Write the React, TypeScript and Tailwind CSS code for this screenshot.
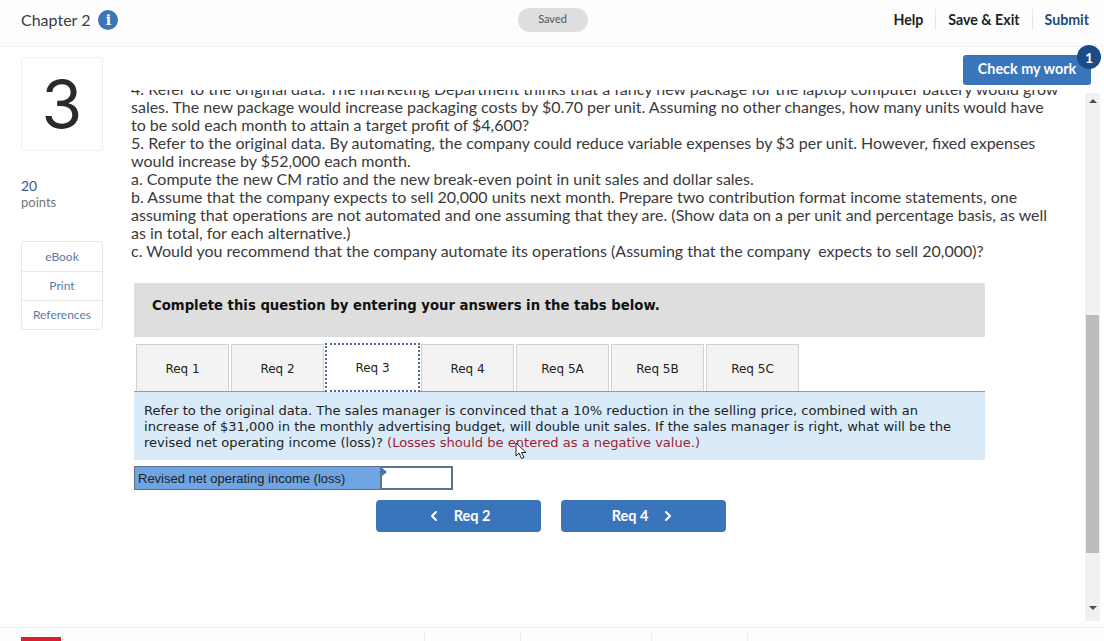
import React from 'react';
import { ChevronLeft, ChevronRight } from 'lucide-react';

const tabs = ['Req 1', 'Req 2', 'Req 3', 'Req 4', 'Req 5A', 'Req 5B', 'Req 5C'];

const lines = [
  '4. Refer to the original data. The marketing Department thinks that a fancy new package for the laptop computer battery would grow',
  'sales. The new package would increase packaging costs by $0.70 per unit. Assuming no other changes, how many units would have',
  'to be sold each month to attain a target profit of $4,600?',
  '5. Refer to the original data. By automating, the company could reduce variable expenses by $3 per unit. However, fixed expenses',
  'would increase by $52,000 each month.',
  'a. Compute the new CM ratio and the new break-even point in unit sales and dollar sales.',
  'b. Assume that the company expects to sell 20,000 units next month. Prepare two contribution format income statements, one',
  'assuming that operations are not automated and one assuming that they are. (Show data on a per unit and percentage basis, as well',
  'as in total, for each alternative.)',
  'c. Would you recommend that the company automate its operations (Assuming that the company  expects to sell 20,000)?',
];

const App = () => {
  return (
    <div className="relative flex h-[641px] w-full flex-col overflow-hidden bg-white font-['Lato',sans-serif] text-[#333]">
      {/* top bar */}
      <header className="flex h-[47px] shrink-0 items-center justify-between border-b border-[#efefef] bg-[#fdfdfd] pb-[7px] pl-[21px] pr-[15px]">
        <div className="flex w-[375px] items-center gap-[8px]">
          <span className="text-[16px] text-[#3c3c3c]">Chapter 2</span>
          <span className="flex h-5 w-5 items-center justify-center rounded-full bg-[#3b75b8] font-['DejaVu_Serif',serif] text-[14px] font-bold leading-none text-white">i</span>
        </div>
        <div className="flex h-6 w-[70px] items-center justify-center rounded-full bg-[#dedede] text-[11px] text-[#555]">Saved</div>
        <div className="flex w-[380px] items-center justify-end text-[14.2px] font-bold">
          <span className="pr-3 text-[#222]">Help</span>
          <span className="border-l border-[#e6e6e6] px-3 text-[#222]">Save &amp; Exit</span>
          <span className="border-l border-[#e6e6e6] pl-3 text-[#1f4a7c]">Submit</span>
        </div>
      </header>

      <div className="flex min-h-0 flex-1">
        {/* left rail */}
        <aside className="w-[131px] shrink-0 pl-[21px] pt-[10px]">
          <div className="flex h-[94px] w-[82px] items-center justify-center rounded border border-[#efefef] pb-px font-['Inter',sans-serif] text-[66px] font-normal leading-none text-[#2a2a2a]">3</div>
          <div className="mt-[27px] text-[14px] leading-4 text-[#3d5a80]">20</div>
          <div className="text-[13px] leading-4 text-[#777]">points</div>
          <div className="mt-[31px] w-[82px] rounded border border-[#e8e8e8] text-center text-[12px] text-[#5a7aa4]">
            <div className="flex h-[30px] items-center justify-center border-b border-[#e8e8e8]">eBook</div>
            <div className="flex h-[29px] items-center justify-center border-b border-[#e8e8e8]">Print</div>
            <div className="flex h-[28px] items-center justify-center">References</div>
          </div>
        </aside>

        {/* question area */}
        <main className="mt-[43px] min-w-0 flex-1 overflow-hidden">
          <div className="-mt-[10px] whitespace-pre text-[16px] leading-[18px] text-[#3a3a3a]">
            {lines.map((line) => (
              <div key={line}>{line}</div>
            ))}
          </div>

          <div className="ml-[3px] mt-[23px] w-[851px]">
            <div className="flex h-[54px] items-center bg-[#dedede] pb-2 pl-[18px] font-['DejaVu_Sans',sans-serif] text-[13.25px] font-bold text-[#111]">
              Complete this question by entering your answers in the tabs below.
            </div>

            <div className="mt-[7px] flex gap-[2px] border-b border-[#9a9a9a] pl-[2px] font-['DejaVu_Sans',sans-serif] text-[12px] text-[#222]">
              {tabs.map((tab) => (
                <div
                  key={tab}
                  className={
                    tab === 'Req 3'
                      ? 'relative z-10 -mx-px -my-px flex h-[49px] w-[95px] items-center justify-center border-2 border-dotted border-[#4f6b8c] bg-white pt-px'
                      : 'flex h-[47px] w-[93px] items-center justify-center border border-b-0 border-[#d2d2d2] bg-[#f3f3f3] pt-px'
                  }
                >
                  {tab}
                </div>
              ))}
            </div>

            <div className="h-[68px] bg-[#d9ebf9] pl-[10px] pr-[20px] pt-[11px] font-['DejaVu_Sans',sans-serif] text-[13.07px] leading-4 text-[#222]">
              Refer to the original data. The sales manager is convinced that a 10% reduction in the selling price, combined with an increase of $31,000 in the monthly advertising budget, will double unit sales. If the sales manager is right, what will be the revised net operating income (loss)?{' '}
              <span className="text-[#a32034]">(Losses should be entered as a negative value.)</span>
            </div>

            <div className="mt-[6px] flex h-6 w-[319px] border border-[#5c7390] font-['Liberation_Sans',sans-serif] text-[13px] text-[#222]">
              <div className="flex w-[245px] items-center bg-[#6ea5e2] pl-[3px] pt-px">Revised net operating income (loss)</div>
              <div className="relative flex-1 border border-l-2 border-[#5c7390] bg-white">
                <div className="absolute left-0 top-0 h-0 w-0 border-y-[4px] border-l-[5px] border-y-transparent border-l-[#3b75b8]" />
              </div>
            </div>

            <div className="mt-[10px] flex gap-5 pl-[242px] text-[14.5px] font-bold text-white">
              <div className="flex h-8 w-[165px] items-center justify-center gap-[12px] rounded-sm bg-[#3a74ba] pb-px pr-px">
                <ChevronLeft size={16} strokeWidth={3} />
                <span>Req 2</span>
              </div>
              <div className="flex h-8 w-[165px] items-center justify-center gap-[12px] rounded-sm bg-[#3a74ba] pb-px pl-px">
                <span>Req 4</span>
                <ChevronRight size={16} strokeWidth={3} />
              </div>
            </div>
          </div>
        </main>

        {/* scrollbar */}
        <div className="mb-[6px] mr-[4px] mt-[46px] flex w-[15px] shrink-0 flex-col items-center bg-[#f1f1f1]">
          <div className="mt-[6px] h-0 w-0 border-x-[4px] border-b-[4px] border-x-transparent border-b-[#505050]" />
          <div className="mt-[212px] h-[238px] w-[13px] bg-[#bcbcbc]" />
          <div className="mt-[53px] h-0 w-0 border-x-[4px] border-t-[4px] border-x-transparent border-t-[#505050]" />
        </div>
      </div>

      {/* footer */}
      <footer className="flex h-[14px] shrink-0 border-t border-[#efefef] bg-[#fdfdfd] pl-[21px] pt-[9px]">
        <div className="h-[5px] w-10 bg-[#d3202c]" />
        <div className="ml-[363px] mt-[-6px] h-[11px] w-[96px] border-l border-[#ececec]" />
        <div className="mt-[-6px] h-[11px] w-[131px] border-l border-[#ececec]" />
        <div className="mt-[-6px] h-[11px] w-[96px] border-l border-[#ececec]" />
        <div className="mt-[-6px] h-[11px] border-l border-[#ececec]" />
      </footer>

      {/* floating check button */}
      <div className="absolute left-[963px] top-[55px] flex h-[30px] w-[128px] items-center justify-center rounded-[3px] bg-[#3a74ba] pb-[3px] text-[14.4px] font-bold text-white">
        Check my work
      </div>
      <div className="absolute left-[1077px] top-[45px] flex h-6 w-6 items-center justify-center rounded-full bg-[#1c4a85] text-[14px] font-bold text-white">1</div>

      {/* mouse cursor */}
      <svg className="absolute left-[515px] top-[442px]" width="13" height="18" viewBox="0 0 13 18">
        <path d="M1 1 L1 14 L4 11 L6.5 16.5 L9 15.5 L6.5 10.5 L11 10.5 Z" fill="#fff" stroke="#222" strokeWidth="1" />
      </svg>
    </div>
  );
};

export default App;
